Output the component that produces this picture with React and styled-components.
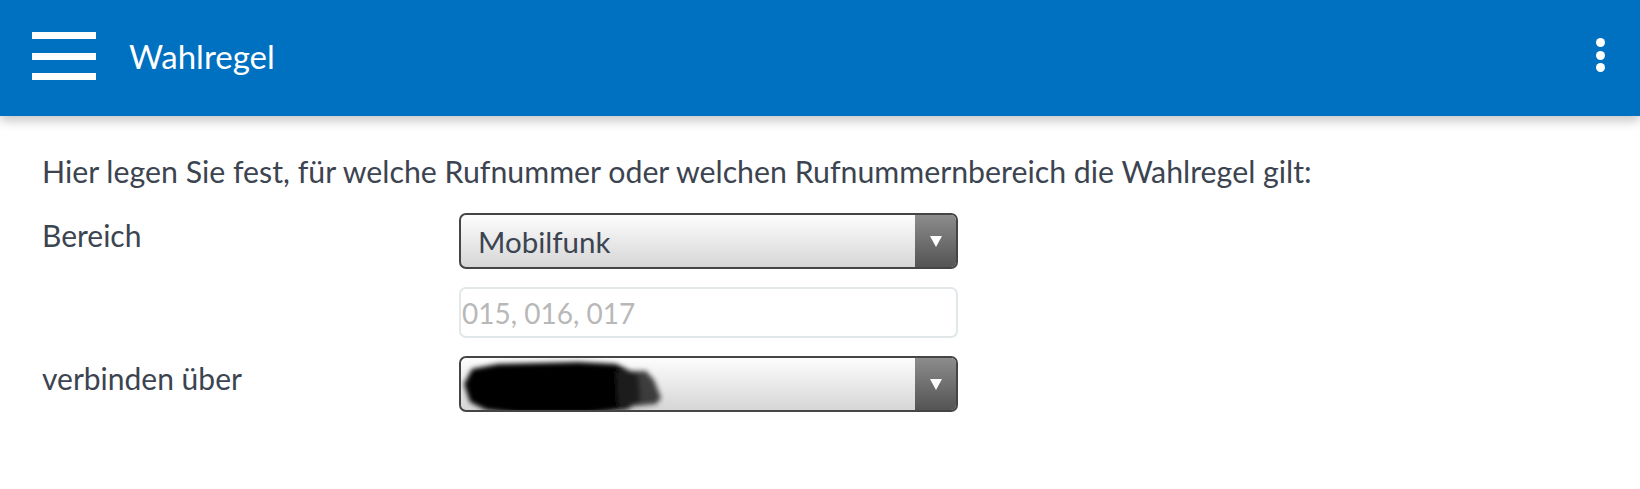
import React from 'react';
import styled, { createGlobalStyle } from 'styled-components';

const GlobalStyle = createGlobalStyle`
  body {
    margin: 0;
    background: #fff;
    font-family: Lato, "Open Sans", sans-serif;
    color: #3b4450;
  }
`;

function App() {
  return (
    <>
      <GlobalStyle />
      <TopBar>
        <MenuButton>
          <MenuLine />
          <MenuLine />
          <MenuLine />
        </MenuButton>
        <Title>Wahlregel</Title>
        <MoreButton>
          <Dot />
          <Dot />
          <Dot />
        </MoreButton>
      </TopBar>
      <Content>
        <Intro>
          Hier legen Sie fest, für welche Rufnummer oder welchen Rufnummernbereich die Wahlregel gilt:
        </Intro>
        <Form>
          <Label>Bereich</Label>
          <Select>
            <SelectValue>Mobilfunk</SelectValue>
            <ArrowBox>
              <Arrow />
            </ArrowBox>
          </Select>
          <span />
          <NumberInput placeholder="015, 016, 017" />
          <Label>verbinden über</Label>
          <Select>
            <SelectValue>
              <Redacted width="210" height="62" viewBox="0 0 210 62">
                <defs>
                  <filter id="smear" x="-10%" y="-20%" width="120%" height="140%">
                    <feGaussianBlur stdDeviation="2.8" />
                  </filter>
                </defs>
                <g filter="url(#smear)">
                  <path
                    d="M6 28 L14 13 L40 8 L120 6 L158 8 L170 14 L180 19 L182 45 L170 53 L130 58 L60 58 L28 54 L12 46 Z"
                    fill="#000"
                  />
                  <path
                    d="M158 15 L188 15 L196 24 L203 42 L198 48 L178 50 L160 50 Z"
                    fill="#222"
                    opacity="0.85"
                  />
                </g>
              </Redacted>
            </SelectValue>
            <ArrowBox>
              <Arrow />
            </ArrowBox>
          </Select>
        </Form>
      </Content>
    </>
  );
}

const TopBar = styled.header`
  position: relative;
  display: flex;
  align-items: center;
  height: 116px;
  padding: 0 35px 0 32px;
  background-color: #0070c0;
  box-shadow: 0 5px 10px rgba(0, 0, 0, 0.22);
`;

const MenuButton = styled.div`
  display: flex;
  flex-direction: column;
  gap: 13.5px;
  width: 64px;
  margin-top: -4px;
`;

const MenuLine = styled.span`
  display: block;
  height: 7px;
  background: #fff;
`;

const Title = styled.h1`
  flex: 1;
  margin: -4px 0 0 33px;
  color: #fff;
  font-size: 33px;
  font-weight: 400;
`;

const MoreButton = styled.div`
  display: flex;
  flex-direction: column;
  gap: 3.5px;
  margin-top: -6px;
`;

const Dot = styled.span`
  width: 9px;
  height: 9px;
  border-radius: 50%;
  background: #fff;
`;

const Content = styled.main`
  padding: 37px 42px;
`;

const Intro = styled.p`
  margin: 0 0 24px;
  font-size: 30.3px;
  line-height: 1.2;
`;

const Form = styled.div`
  display: grid;
  grid-template-columns: 417px 499px;
  row-gap: 18px;
`;

const Label = styled.div`
  padding-top: 4px;
  font-size: 30px;
  line-height: 1.2;
`;

const Select = styled.div`
  display: flex;
  height: 56px;
  box-sizing: border-box;
  border: 2px solid #454545;
  border-radius: 7px;
  overflow: hidden;
  background: linear-gradient(#fdfdfd, #d6d6d6);
`;

const SelectValue = styled.div`
  flex: 1;
  display: flex;
  align-items: center;
  padding-left: 17px;
  font-size: 29.5px;
  color: #3b4450;
  position: relative;
`;

const Redacted = styled.svg`
  position: absolute;
  left: -3px;
  top: -2px;
  overflow: visible;
`;

const ArrowBox = styled.div`
  display: flex;
  align-items: center;
  justify-content: center;
  width: 41px;
  background: linear-gradient(#8c8c8c, #545454);
`;

const Arrow = styled.span`
  width: 0;
  height: 0;
  border-left: 6.5px solid transparent;
  border-right: 6.5px solid transparent;
  border-top: 11px solid #fff;
`;

const NumberInput = styled.input`
  height: 51px;
  box-sizing: border-box;
  padding: 0 0 0 1px;
  border: 2px solid #e2e7ea;
  border-radius: 7px;
  font-family: Lato, "Open Sans", sans-serif;
  font-size: 28px;
  outline: none;
  &::placeholder {
    color: #b8b8b8;
  }
`;

export default App;
